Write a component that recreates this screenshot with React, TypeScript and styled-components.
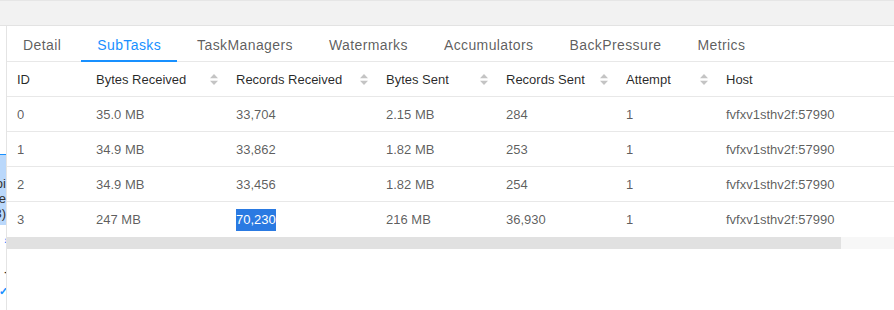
import React from 'react';
import styled, { createGlobalStyle } from 'styled-components';

const GlobalStyle = createGlobalStyle`
  html, body {
    margin: 0;
    padding: 0;
    background: #ffffff;
  }
  body {
    font-family: "Liberation Sans", Arial, sans-serif;
    -webkit-font-smoothing: antialiased;
  }
`;

type Column = { key: string; title: string; width: string; sortable: boolean };

const columns: Column[] = [
  { key: 'id', title: 'ID', width: '79px', sortable: false },
  { key: 'bytesIn', title: 'Bytes Received', width: '140px', sortable: true },
  { key: 'recordsIn', title: 'Records Received', width: '150px', sortable: true },
  { key: 'bytesOut', title: 'Bytes Sent', width: '120px', sortable: true },
  { key: 'recordsOut', title: 'Records Sent', width: '120px', sortable: true },
  { key: 'attempt', title: 'Attempt', width: '100px', sortable: true },
  { key: 'host', title: 'Host', width: '1fr', sortable: false },
];

const gridTemplate = columns.map((c) => c.width).join(' ');

const rows = [
  { id: '0', bytesIn: '35.0 MB', recordsIn: '33,704', bytesOut: '2.15 MB', recordsOut: '284', attempt: '1', host: 'fvfxv1sthv2f:57990' },
  { id: '1', bytesIn: '34.9 MB', recordsIn: '33,862', bytesOut: '1.82 MB', recordsOut: '253', attempt: '1', host: 'fvfxv1sthv2f:57990' },
  { id: '2', bytesIn: '34.9 MB', recordsIn: '33,456', bytesOut: '1.82 MB', recordsOut: '254', attempt: '1', host: 'fvfxv1sthv2f:57990' },
  { id: '3', bytesIn: '247 MB', recordsIn: '70,230', bytesOut: '216 MB', recordsOut: '36,930', attempt: '1', host: 'fvfxv1sthv2f:57990', selected: 'recordsIn' },
];

const tabs = ['Detail', 'SubTasks', 'TaskManagers', 'Watermarks', 'Accumulators', 'BackPressure', 'Metrics'];

const SortIcon = () => (
  <SortWrap>
    <svg width="8" height="11" viewBox="0 0 8 11">
      <path d="M4 0 L8 4.2 L0 4.2 Z" fill="#c4c4c4" />
      <path d="M4 11 L8 6.8 L0 6.8 Z" fill="#c4c4c4" />
    </svg>
  </SortWrap>
);

const App = () => {
  return (
    <>
      <GlobalStyle />
      <Page>
        <TopBar />
        <Body>
          <SideStrip>
            <SideSelection>
              <SideLine>endpoi</SideLine>
              <SideLine>node</SideLine>
              <SideLine>(3)</SideLine>
            </SideSelection>
            <SideGlyph color="#1890ff" top={10}>›</SideGlyph>
            <SideGlyph color="#333" top={20}>-</SideGlyph>
            <SideGlyph color="#1890ff" top={9}>✓</SideGlyph>
          </SideStrip>
          <Main>
            <TabBar>
              {tabs.map((t) => (
                <Tab key={t} active={t === 'SubTasks'}>
                  {t}
                </Tab>
              ))}
            </TabBar>
            <TableViewport>
              <Table>
                <HeaderRow>
                  {columns.map((c) => (
                    <HeaderCell key={c.key}>
                      <span>{c.title}</span>
                      {c.sortable && <SortIcon />}
                    </HeaderCell>
                  ))}
                </HeaderRow>
                {rows.map((r) => (
                  <Row key={r.id}>
                    {columns.map((c) => (
                      <Cell key={c.key}>
                        {r.selected === c.key ? (
                          <Selected>{(r as any)[c.key]}</Selected>
                        ) : (
                          (r as any)[c.key]
                        )}
                      </Cell>
                    ))}
                  </Row>
                ))}
              </Table>
            </TableViewport>
            <ScrollTrack>
              <ScrollThumb />
            </ScrollTrack>
          </Main>
        </Body>
      </Page>
    </>
  );
};

const Page = styled.div`
  width: 894px;
  height: 310px;
  display: flex;
  flex-direction: column;
  overflow: hidden;
  background: #ffffff;
`;

const TopBar = styled.div`
  flex: none;
  height: 24px;
  background: #f2f2f2;
  border-top: 1px solid #e6e6e6;
  border-bottom: 1px solid #e3e3e3;
`;

const Body = styled.div`
  flex: 1;
  display: flex;
  min-height: 0;
`;

const SideStrip = styled.div`
  width: 6px;
  flex: none;
  border-right: 1px solid #e4e4e4;
  overflow: hidden;
  display: flex;
  flex-direction: column;
  align-items: flex-end;
  padding-top: 128px;
`;

const SideSelection = styled.div`
  width: 6px;
  height: 71px;
  background: #bad8fb;
  border-top: 1px solid #1890ff;
  display: flex;
  flex-direction: column;
  justify-content: flex-end;
  align-items: flex-end;
  padding-bottom: 4px;
  box-sizing: border-box;
`;

const SideLine = styled.div`
  font-size: 13px;
  line-height: 15px;
  color: #333;
  white-space: nowrap;
  direction: rtl;
`;

const SideGlyph = styled.div<{ color: string; top: number }>`
  margin-top: ${(p) => p.top}px;
  font-size: 11px;
  line-height: 11px;
  font-weight: bold;
  color: ${(p) => p.color};
  white-space: nowrap;
  margin-right: -2px;
`;

const Main = styled.div`
  flex: 1;
  min-width: 0;
  display: flex;
  flex-direction: column;
  overflow: hidden;
`;

const TabBar = styled.div`
  height: 35px;
  flex: none;
  display: flex;
  gap: 4px;
  border-bottom: 1px solid #e8e8e8;
`;

const Tab = styled.div<{ active?: boolean }>`
  padding: 3px 16px 0;
  display: flex;
  align-items: center;
  font-size: 14px;
  letter-spacing: 0.4px;
  color: ${(p) => (p.active ? '#1890ff' : 'rgba(0, 0, 0, 0.65)')};
  border-bottom: 2px solid ${(p) => (p.active ? '#1890ff' : 'transparent')};
  margin-bottom: -1px;
  white-space: nowrap;
`;

const TableViewport = styled.div`
  overflow: hidden;
  flex: none;
`;

const Table = styled.div`
  width: 943px;
  font-size: 13px;
`;

const HeaderRow = styled.div`
  display: grid;
  grid-template-columns: ${gridTemplate};
  height: 34px;
  border-bottom: 1px solid #e8e8e8;
`;

const HeaderCell = styled.div`
  display: flex;
  align-items: center;
  justify-content: space-between;
  padding: 0 8px 0 10px;
  color: rgba(0, 0, 0, 0.85);
  white-space: nowrap;
`;

const SortWrap = styled.span`
  display: flex;
  align-items: center;
`;

const Row = styled.div`
  display: grid;
  grid-template-columns: ${gridTemplate};
  height: 34px;
  border-bottom: 1px solid #e8e8e8;
  &:last-child {
    border-bottom: none;
    height: 35px;
  }
`;

const Cell = styled.div`
  display: flex;
  align-items: center;
  padding: 0 8px 0 10px;
  color: rgba(0, 0, 0, 0.65);
  white-space: nowrap;
`;

const Selected = styled.span`
  background: #2a7ae2;
  color: #ffffff;
  padding: 2px 0;
  line-height: 18px;
`;

const ScrollTrack = styled.div`
  height: 12px;
  flex: none;
  background: #f7f7f7;
`;

const ScrollThumb = styled.div`
  width: 834px;
  height: 100%;
  background: #e1e1e1;
`;

export default App;
